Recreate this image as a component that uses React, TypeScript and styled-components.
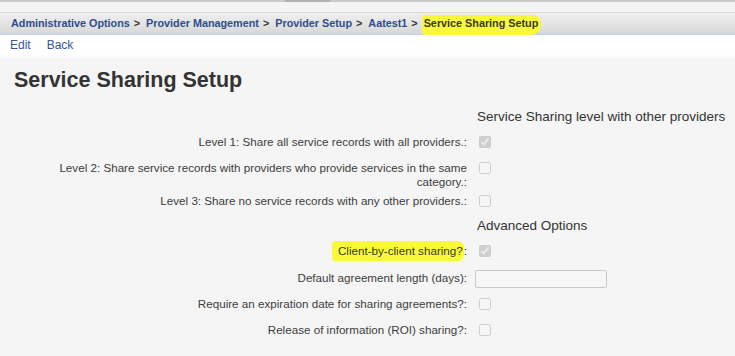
import React from "react";
import styled, { createGlobalStyle } from "styled-components";

const Global = createGlobalStyle`
  html, body { margin: 0; padding: 0; background: #f5f5f5; }
  body { font-family: "Liberation Sans", Arial, sans-serif; color: #333; }
`;

const Page = styled.div`
  width: 735px;
  min-height: 356px;
  display: flex;
  flex-direction: column;
  background: #f5f5f5;
`;

const TopStrip = styled.div`
  height: 2px;
  background: #cacaca;
  display: flex;
`;

const StripThumb = styled.div`
  margin-left: 285px;
  width: 45px;
  background: #b2b2b2;
`;

const SubStrip = styled.div`
  height: 10px;
  background: #f4f4f4;
  border-bottom: 1px solid #dcdcdc;
`;

const Breadcrumb = styled.nav`
  height: 20px;
  line-height: 20px;
  padding-left: 11px;
  background: linear-gradient(#efefef, #d9d9d9);
  border-bottom: 2px solid #c8d6e4;
  font-size: 10.8px;
  font-weight: bold;
  white-space: nowrap;
`;

const Crumb = styled.a`
  color: #2f4d8a;
  text-decoration: none;
`;

const Sep = styled.span`
  color: #333;
  margin: 0 6px 0 4px;
`;

const Marker = styled.span`
  background: #f9f93c;
  color: #3a3a22;
`;

const Current = styled(Marker)`
  margin-left: -2px;
  padding: 2px 3px 6px 2px;
  border-radius: 2px 8px 10px 3px;
`;

const ClientMark = styled(Marker)`
  padding: 3px 1px 4px 6px;
  border-radius: 4px 6px 6px 3px;
`;

const Actions = styled.div`
  height: 20px;
  background: #fff;
  display: flex;
  align-items: center;
  gap: 16px;
  padding-left: 10px;
  font-size: 12px;
`;

const ActionLink = styled.a`
  color: #365698;
  text-decoration: none;
`;

const Main = styled.main`
  flex: 1;
  padding: 12px 14px 0;
  background: linear-gradient(#fdfdfd, #f5f5f5 4px);
`;

const Title = styled.h1`
  margin: 0;
  font-size: 21.5px;
  line-height: 26px;
  font-weight: bold;
  color: #333;
`;

const Form = styled.div`
  margin-top: 15px;
  display: flex;
  flex-direction: column;
`;

const Row = styled.div`
  display: grid;
  grid-template-columns: 453px 1fr;
  column-gap: 8px;
  align-items: start;
  min-height: 26.2px;
`;

const HeaderRow = styled(Row)`
  min-height: 0;
  padding-bottom: 6px;
`;

const SectionTitle = styled.div`
  grid-column: 2;
  padding-left: 2px;
  font-size: 13.5px;
  line-height: 18px;
  white-space: nowrap;
  color: #333;
`;

const Label = styled.div`
  text-align: right;
  font-size: 11.65px;
  line-height: 14px;
  padding: 3px 0 2px;
  color: #3c3c3c;
`;

const Check = styled.input`
  width: 12px;
  height: 12px;
  margin: 4px 0 0 4px;
`;

const TextBox = styled.input`
  width: 132px;
  height: 18px;
  box-sizing: border-box;
  margin-top: 2px;
  border: 1px solid #c8c8c8;
  border-radius: 2px;
  background: #f6f6f6;
`;

type Field = { label: React.ReactNode; kind: "check" | "text"; checked?: boolean };

const levels: Field[] = [
  { label: "Level 1: Share all service records with all providers.:", kind: "check", checked: true },
  {
    label: "Level 2: Share service records with providers who provide services in the same category.:",
    kind: "check",
  },
  { label: "Level 3: Share no service records with any other providers.:", kind: "check" },
];

const advanced: Field[] = [
  {
    label: (
      <>
        <ClientMark>Client-by-client sharing?</ClientMark>:
      </>
    ),
    kind: "check",
    checked: true,
  },
  { label: "Default agreement length (days):", kind: "text" },
  { label: "Require an expiration date for sharing agreements?:", kind: "check" },
  { label: "Release of information (ROI) sharing?:", kind: "check" },
];

const FieldRow = ({ f }: { f: Field }) => (
  <Row>
    <Label>{f.label}</Label>
    <div>
      {f.kind === "check" ? (
        <Check type="checkbox" disabled defaultChecked={!!f.checked} />
      ) : (
        <TextBox type="text" disabled />
      )}
    </div>
  </Row>
);

export default function App() {
  return (
    <Page>
      <Global />
      <TopStrip>
        <StripThumb />
      </TopStrip>
      <SubStrip />
      <Breadcrumb>
        <Crumb href="#">Administrative Options</Crumb>
        <Sep>&gt;</Sep>
        <Crumb href="#">Provider Management</Crumb>
        <Sep>&gt;</Sep>
        <Crumb href="#">Provider Setup</Crumb>
        <Sep>&gt;</Sep>
        <Crumb href="#">Aatest1</Crumb>
        <Sep>&gt;</Sep>
        <Current>Service Sharing Setup</Current>
      </Breadcrumb>
      <Actions>
        <ActionLink href="#">Edit</ActionLink>
        <ActionLink href="#">Back</ActionLink>
      </Actions>
      <Main>
        <Title>Service Sharing Setup</Title>
        <Form>
          <HeaderRow>
            <SectionTitle>Service Sharing level with other providers</SectionTitle>
          </HeaderRow>
          {levels.map((f, i) => (
            <FieldRow key={i} f={f} />
          ))}
          <HeaderRow>
            <SectionTitle>Advanced Options</SectionTitle>
          </HeaderRow>
          {advanced.map((f, i) => (
            <FieldRow key={i} f={f} />
          ))}
        </Form>
      </Main>
    </Page>
  );
}
